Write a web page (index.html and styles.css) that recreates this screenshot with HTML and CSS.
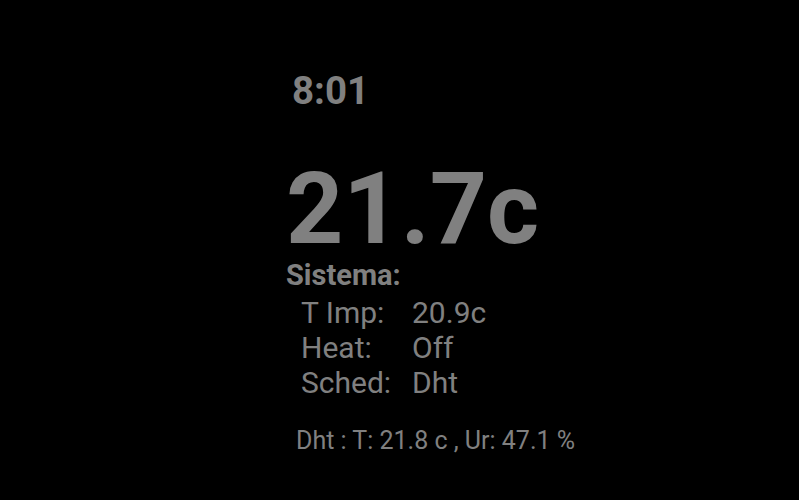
FILE: index.html
```html
<!DOCTYPE html>
<html>
<head>
<meta charset="utf-8">
<link rel="stylesheet" href="styles.css">
</head>
<body>
<div class="screen">
  <div class="panel">
    <div class="clock">8:01</div>
    <div class="temp">21.7c</div>
    <div class="section">Sistema:</div>
    <div class="rows">
      <div class="label">T Imp:</div><div class="value">20.9c</div>
      <div class="label">Heat:</div><div class="value">Off</div>
      <div class="label">Sched:</div><div class="value">Dht</div>
    </div>
    <div class="dht">Dht : T: 21.8 c , Ur: 47.1 %</div>
  </div>
</div>
</body>
</html>
```
FILE: styles.css
```css
html, body {
  margin: 0;
  padding: 0;
  background: #000;
}
.screen {
  width: 799px;
  height: 500px;
  background: #000;
  color: #808080;
  font-family: Roboto, "Liberation Sans", sans-serif;
  padding-left: 286px;
  box-sizing: border-box;
}
.panel {
  padding-top: 66px;
}
.clock {
  font-weight: bold;
  font-size: 38.5px;
  line-height: 50px;
  padding-left: 6px;
}
.temp {
  font-weight: bold;
  font-size: 100px;
  line-height: 100px;
  margin-top: 43px;
}
.section {
  font-weight: bold;
  font-size: 29px;
  line-height: 32px;
  margin-top: 0;
}
.rows {
  display: grid;
  grid-template-columns: 111px auto;
  font-size: 30px;
  line-height: 35px;
  padding-left: 15px;
  margin-top: 4px;
}
.dht {
  font-size: 25px;
  line-height: 30px;
  margin-top: 26px;
  padding-left: 10px;
}
```
